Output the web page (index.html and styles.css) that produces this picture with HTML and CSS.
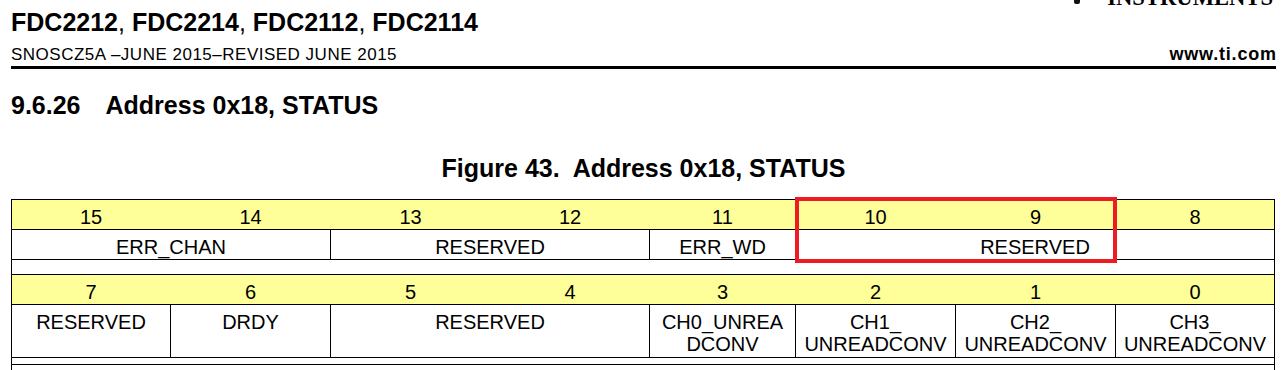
FILE: index.html
```html
<!DOCTYPE html>
<html lang="en">
<head>
<meta charset="utf-8">
<title>FDC2212 STATUS register</title>
<link rel="stylesheet" href="styles.css">
</head>
<body>
<div class="page">
  <header class="doc-head">
    <div class="brand"><span class="brand-mark"></span><span class="brand-name">INSTRUMENTS</span></div>
    <h1 class="doc-title">FDC2212<span class="comma">,</span> FDC2214<span class="comma">,</span> FDC2112<span class="comma">,</span> FDC2114</h1>
    <div class="doc-meta"><span class="doc-id">SNOSCZ5A –JUNE 2015–REVISED JUNE 2015</span><span class="doc-site">www.ti.com</span></div>
  </header>
  <h2 class="section-title"><span class="section-num">9.6.26</span>Address 0x18, STATUS</h2>
  <div class="figure-title">Figure 43.&nbsp; Address 0x18, STATUS</div>
  <div class="reg-wrap">
    <div class="reg">
      <div class="bits">
        <div class="bit">15</div>
        <div class="bit">14</div>
        <div class="bit">13</div>
        <div class="bit">12</div>
        <div class="bit">11</div>
        <div class="bit">10</div>
        <div class="bit">9</div>
        <div class="bit">8</div>
      </div>

      <div class="cell span2">ERR_CHAN</div>
      <div class="cell span2">RESERVED</div>
      <div class="cell">ERR_WD</div>
      <div class="cell span3">RESERVED</div>

      <div class="spacer"></div>

      <div class="bits">
        <div class="bit">7</div>
        <div class="bit">6</div>
        <div class="bit">5</div>
        <div class="bit">4</div>
        <div class="bit">3</div>
        <div class="bit">2</div>
        <div class="bit">1</div>
        <div class="bit">0</div>
      </div>

      <div class="cell">RESERVED</div>
      <div class="cell">DRDY</div>
      <div class="cell span2">RESERVED</div>
      <div class="cell">CH0_UNREA<br>DCONV</div>
      <div class="cell">CH1_<br>UNREADCONV</div>
      <div class="cell">CH2_<br>UNREADCONV</div>
      <div class="cell">CH3_<br>UNREADCONV</div>

      <div class="spacer"></div>
      <div class="spacer"></div>
    </div>
    <div class="highlight"></div>
  </div>
</div>
</body>
</html>
```
FILE: styles.css
```css
html, body {
  margin: 0;
  overflow: hidden;
  background: #fff;
}

body {
  font-family: "Liberation Sans", Arial, sans-serif;
  color: #000;
}

.page {
  width: 1265px;
  padding-left: 11px;
}

.brand {
  display: flex;
  justify-content: flex-end;
  align-items: flex-end;
  height: 10px;
  padding-right: 3px;
}

.brand-mark {
  align-self: flex-start;
  width: 6px;
  height: 4px;
  background: #111;
  margin-right: 27px;
  border-radius: 0 0 2px 2px;
}

.brand-name {
  font-family: "Liberation Serif", "Times New Roman", serif;
  font-weight: bold;
  font-size: 22.6px;
  line-height: 1;
}

.doc-title {
  margin: 0;
  font-size: 25px;
  line-height: 24px;
  font-weight: bold;
}

.comma {
  font-weight: normal;
}

.doc-meta {
  display: flex;
  justify-content: space-between;
  align-items: baseline;
  margin-top: 10px;
  padding-bottom: 1px;
  border-bottom: 3px solid #000;
  line-height: 20px;
}

.doc-id {
  font-size: 17px;
  letter-spacing: 0.5px;
}

.doc-site {
  font-size: 18px;
  font-weight: bold;
  letter-spacing: 0.8px;
  margin-right: -0.8px;
}

.section-title {
  margin: 24px 0 0;
  font-size: 25px;
  line-height: 24px;
  font-weight: bold;
}

.section-num {
  margin-right: 25px;
}

.figure-title {
  margin-top: 39px;
  text-align: center;
  font-size: 25px;
  line-height: 24px;
  font-weight: bold;
}

.reg-wrap {
  position: relative;
  margin-top: 19px;
  width: 1264px;
}

.reg,
.bits {
  display: grid;
  grid-template-columns: 158px 159px 159px 158px 145px 159px 159px 158px;
  gap: 1px;
}

.reg {
  grid-template-rows: 29px 29px 14px 29px 52px 6px 6px;
  padding: 1px 1px 0;
  background: #000;
  font-size: 20px;
  line-height: 22px;
}

.bits {
  grid-column: 1 / -1;
  background: #ffff99;
}

.bit,
.cell {
  text-align: center;
  padding-top: 6px;
  box-sizing: border-box;
  overflow: hidden;
  white-space: nowrap;
}

.cell {
  background: #fff;
}

.span2 {
  grid-column: span 2;
}

.span3 {
  grid-column: span 3;
}

.spacer {
  grid-column: 1 / -1;
  background: #fff;
}

.highlight {
  position: absolute;
  left: 784px;
  top: -2px;
  width: 322px;
  height: 66px;
  box-sizing: border-box;
  border: 4px solid #ed1c24;
}
```
